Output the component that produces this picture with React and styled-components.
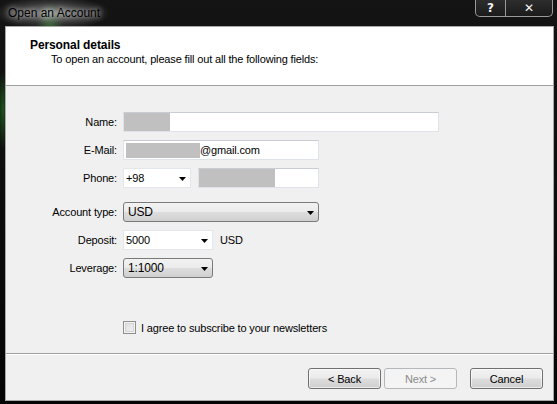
import React from 'react';
import styled, { createGlobalStyle } from 'styled-components';

const GlobalStyle = createGlobalStyle`
    html, body {
        margin: 0;
        padding: 0;
        background: #000;
        overflow: hidden;
    }
    body {
        font-family: "Liberation Sans", Arial, sans-serif;
        font-size: 11px;
        letter-spacing: -0.15px;
    }
`;

function Arrow() {
    return (
        <svg width="7" height="4" viewBox="0 0 7 4">
            <path d="M0 0 H7 L3.5 4 Z" fill="#000" />
        </svg>
    );
}

function Combo({ value, width, editable }) {
    return (
        <ComboBox $width={width} $editable={editable}>
            <ComboText $editable={editable}>{value}</ComboText>
            <ComboArrow><Arrow /></ComboArrow>
        </ComboBox>
    );
}

function FieldRow({ label, children }) {
    return (
        <Row>
            <Label>{label}</Label>
            {children}
        </Row>
    );
}

export default function App() {
    return (
        <React.Fragment>
            <GlobalStyle />
            <Window>
                <TitleBar>
                    <Title>Open an Account</Title>
                    <CaptionButtons>
                        <CaptionButton $width={29}>?</CaptionButton>
                        <CaptionButton $width={46}>✕</CaptionButton>
                    </CaptionButtons>
                </TitleBar>
                <Client>
                    <Header>
                        <HeaderTitle>Personal details</HeaderTitle>
                        <HeaderText>To open an account, please fill out all the following fields:</HeaderText>
                    </Header>
                    <Body>
                        <Group>
                            <FieldRow label="Name:">
                                <TextBox $width={316}><Redacted $width={46} /></TextBox>
                            </FieldRow>
                            <FieldRow label="E-Mail:">
                                <TextBox $width={196}>
                                    <Redacted $width={74} $inset />
                                    <span>@gmail.com</span>
                                </TextBox>
                            </FieldRow>
                            <FieldRow label="Phone:">
                                <Combo value="+98" width={68} editable />
                                <TextBox $width={121} $gap={7}><Redacted $width={76} /></TextBox>
                            </FieldRow>
                        </Group>
                        <Group>
                            <FieldRow label="Account type:">
                                <Combo value="USD" width={196} />
                            </FieldRow>
                            <FieldRow label="Deposit:">
                                <Combo value="5000" width={90} editable />
                                <Unit>USD</Unit>
                            </FieldRow>
                            <FieldRow label="Leverage:">
                                <Combo value="1:1000" width={90} />
                            </FieldRow>
                        </Group>
                        <CheckRow>
                            <CheckBox />
                            <span>I agree to subscribe to your newsletters</span>
                        </CheckRow>
                    </Body>
                    <Footer>
                        <Button>&lt; Back</Button>
                        <Button $disabled>Next &gt;</Button>
                        <Button $spaced>Cancel</Button>
                    </Footer>
                </Client>
            </Window>
        </React.Fragment>
    );
}

const Window = styled.div`
    width: 557px;
    height: 404px;
    display: flex;
    flex-direction: column;
    background:
        radial-gradient(ellipse 58px 17px at 52px 13px, rgba(200,200,200,0.6), rgba(130,130,130,0.3) 60%, transparent 100%),
        radial-gradient(ellipse 14px 26px at 50px 28px, rgba(60,170,60,0.5), transparent 100%),
        radial-gradient(ellipse 6px 40px at 3px 110px, rgba(40,150,40,0.5), transparent 100%),
        linear-gradient(180deg, #141414 0%, #050505 100%);
`;

const TitleBar = styled.div`
    height: 26px;
    display: flex;
    align-items: flex-start;
    padding-left: 8px;
    flex-shrink: 0;
`;

const Title = styled.div`
    font-size: 12px;
    letter-spacing: 0;
    line-height: 26px;
    color: #000;
    text-shadow: 0 0 5px rgba(255,255,255,0.75), 0 0 10px rgba(255,255,255,0.5);
`;

const CaptionButtons = styled.div`
    margin-left: auto;
    margin-right: 4px;
    display: flex;
    height: 17px;
    margin-top: -1px;
    border: 1px solid #9a9a9a;
    border-top: none;
    border-radius: 0 0 5px 5px;
    overflow: hidden;
    background: linear-gradient(180deg, #2e2e2e 0%, #1b1b1b 100%);
`;

const CaptionButton = styled.div`
    width: ${p => p.$width}px;
    display: flex;
    align-items: center;
    justify-content: center;
    color: #f4f4f4;
    font-family: "DejaVu Sans", sans-serif;
    font-weight: bold;
    font-size: 12px;
    & + & {
        border-left: 1px solid #9a9a9a;
    }
`;

const Client = styled.div`
    margin: 0 3px 3px 5px;
    height: 375px;
    box-sizing: border-box;
    border: 1px solid #a8a8a8;
    background: #f0f0f0;
    display: flex;
    flex-direction: column;
`;

const Header = styled.div`
    height: 59px;
    box-sizing: border-box;
    background: #fff;
    border-bottom: 1px solid #a0a0a0;
    padding: 11px 0 0 24px;
    flex-shrink: 0;
`;

const HeaderTitle = styled.div`
    font-weight: bold;
    font-size: 12px;
    letter-spacing: -0.1px;
    line-height: 14px;
    color: #000;
`;

const HeaderText = styled.div`
    padding-left: 21px;
    line-height: 14px;
    color: #000;
`;

const Body = styled.div`
    flex: 1;
    padding: 26px 0 0 0;
    border-bottom: 1px solid #a0a0a0;
    display: flex;
    flex-direction: column;
`;

const Group = styled.div`
    display: flex;
    flex-direction: column;
    gap: 8px;
    & + & {
        margin-top: 14px;
    }
`;

const Row = styled.div`
    display: flex;
    align-items: center;
    height: 20px;
`;

const Label = styled.div`
    width: 111px;
    text-align: right;
    margin-right: 6px;
    color: #000;
    flex-shrink: 0;
`;

const TextBox = styled.div`
    width: ${p => p.$width}px;
    height: 20px;
    box-sizing: border-box;
    margin-left: ${p => p.$gap || 0}px;
    background: #fff;
    border: 1px solid #dfe2e6;
    border-top-color: #c9ccd1;
    display: flex;
    align-items: center;
    color: #000;
`;

const Redacted = styled.div`
    width: ${p => p.$width}px;
    height: ${p => (p.$inset ? 15 : 18)}px;
    margin-left: ${p => (p.$inset ? 2 : 0)}px;
    background: #c0c0c0;
    flex-shrink: 0;
`;

const ComboBox = styled.div`
    width: ${p => p.$width}px;
    height: 20px;
    box-sizing: border-box;
    display: flex;
    align-items: center;
    border: 1px solid ${p => (p.$editable ? '#e3e6ea' : '#7a7a7a')};
    border-radius: ${p => (p.$editable ? 0 : 3)}px;
    background: ${p => (p.$editable
        ? '#fff'
        : 'linear-gradient(180deg, #f2f2f2 0%, #ebebeb 48%, #dddddd 52%, #cfcfcf 100%)')};
    flex-shrink: 0;
`;

const ComboText = styled.div`
    flex: 1;
    padding-left: ${p => (p.$editable ? 2 : 4)}px;
    color: #000;
    font-size: ${p => (p.$editable ? 11 : 12)}px;
`;

const ComboArrow = styled.div`
    width: 16px;
    display: flex;
    align-items: center;
    justify-content: center;
    padding-top: 1px;
`;

const Unit = styled.div`
    margin-left: 7px;
    color: #000;
`;

const CheckRow = styled.div`
    margin-top: 43px;
    margin-left: 117px;
    display: flex;
    align-items: center;
    gap: 5px;
    color: #000;
`;

const CheckBox = styled.div`
    width: 13px;
    height: 13px;
    box-sizing: border-box;
    border: 1px solid #8e8f8f;
    background: linear-gradient(135deg, #dcdcdc 0%, #f2f2f2 100%);
    box-shadow: inset 0 0 0 1px #f4f4f4, inset 0 0 0 2px #d4d4d4;
`;

const Footer = styled.div`
    height: 46px;
    box-sizing: border-box;
    border-top: 1px solid #fff;
    padding: 13px 10px 0 0;
    display: flex;
    justify-content: flex-end;
    align-items: flex-start;
    gap: 3px;
    flex-shrink: 0;
`;

const Button = styled.div`
    width: 73px;
    height: 21px;
    box-sizing: border-box;
    margin-left: ${p => (p.$spaced ? 10 : 0)}px;
    border: 1px solid ${p => (p.$disabled ? '#b5b8ba' : '#707070')};
    border-radius: 3px;
    display: flex;
    align-items: center;
    justify-content: center;
    color: ${p => (p.$disabled ? '#8b8b8b' : '#000')};
    background: ${p => (p.$disabled
        ? '#f4f4f4'
        : 'linear-gradient(180deg, #f2f2f2 0%, #ebebeb 48%, #dddddd 52%, #cfcfcf 100%)')};
    box-shadow: inset 0 0 0 1px ${p => (p.$disabled ? '#f4f4f4' : 'rgba(255,255,255,0.6)')};
`;
